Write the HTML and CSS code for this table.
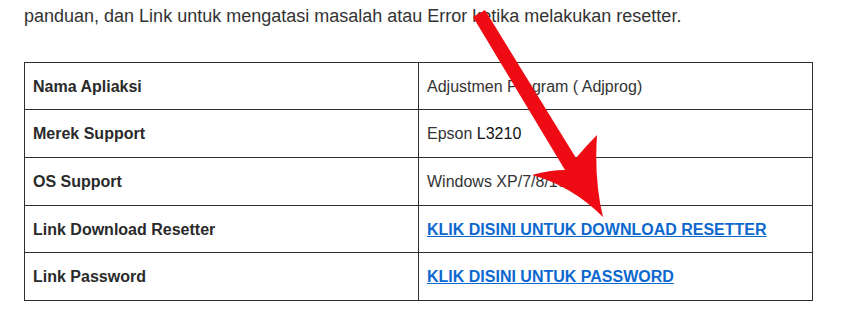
FILE: index.html
```html
<!DOCTYPE html>
<html lang="id">
<head>
  <meta charset="UTF-8" />
  <meta name="viewport" content="width=device-width, initial-scale=1.0"/>
  <title>Resetter Epson L3210</title>
  <link rel="stylesheet" href="styles.css">
</head>
<body>
  <div class="entry">
    <p class="intro">panduan, dan Link untuk mengatasi masalah atau Error ketika melakukan resetter.</p>

    <table class="spec">
      <tr>
        <th>Nama Apliaksi</th>
        <td>Adjustmen Program ( Adjprog)</td>
      </tr>
      <tr>
        <th>Merek Support</th>
        <td>Epson <span class="model">L3210</span></td>
      </tr>
      <tr>
        <th>OS Support</th>
        <td>Windows XP/7/8/10</td>
      </tr>
      <tr>
        <th>Link Download Resetter</th>
        <td><a href="#">KLIK DISINI UNTUK DOWNLOAD RESETTER</a></td>
      </tr>
      <tr>
        <th>Link Password</th>
        <td><a href="#">KLIK DISINI UNTUK PASSWORD</a></td>
      </tr>
    </table>

    <!-- big red pointer drawn over the download row -->
    <svg class="pointer" width="847" height="332" viewBox="0 0 847 332">
      <path d="M473 17 L485 10 L576 158 Q586 146 597 135 Q594 180 603 217 Q572 186 532 175 Q550 170 565 170 Z" fill="#ef0b13"/>
    </svg>
  </div>
</body>
</html>
```

FILE: styles.css
```css
body {
  margin: 0;
  background: #fff;
  color: #333;
  font-family: 'Liberation Sans', Arial, sans-serif;
}

.entry {
  position: relative;
  padding: 2px 0 0 24px;
}

.intro {
  font-size: 18px;
  line-height: 28.8px;
  margin: 0 0 31px;
}

.spec {
  width: 789px;
  border-collapse: collapse;
  table-layout: fixed;
  font-size: 16px;
  line-height: 25.6px;
}

.spec th,
.spec td {
  width: 50%;
  border: 1px solid #2e2e2e;
  padding: 11px 8px 10px;
  text-align: left;
}

.spec th {
  font-weight: bold;
  color: #2a2a2a;
}

.spec td {
  font-weight: normal;
}

.model {
  color: #111;
}

.spec a {
  color: #0c68cf;
  font-weight: bold;
  text-decoration: underline;
}

.pointer {
  position: absolute;
  top: 0;
  left: 0;
  pointer-events: none;
}
```
